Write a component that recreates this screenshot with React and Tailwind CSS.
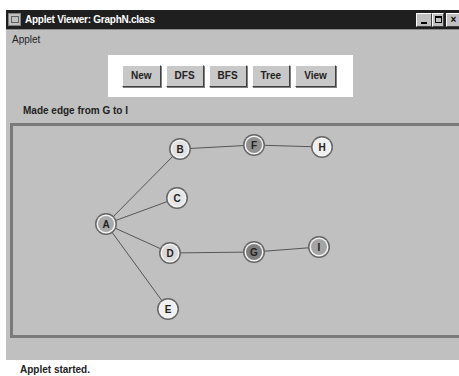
const nodes = [
  { id: "A", x: 106, y: 224, fill: "#a9a9a9" },
  { id: "B", x: 180, y: 149, fill: "#e2e2e2" },
  { id: "C", x: 177, y: 198, fill: "#e6e6e6" },
  { id: "D", x: 170, y: 253, fill: "#d9d9d9" },
  { id: "E", x: 168, y: 309, fill: "#f0f0f0" },
  { id: "F", x: 254, y: 145, fill: "#919191" },
  { id: "G", x: 254, y: 252, fill: "#7f7f7f" },
  { id: "H", x: 322, y: 147, fill: "#efefef" },
  { id: "I", x: 319, y: 247, fill: "#a4a4a4" },
];

const edges = [
  ["A", "B"],
  ["A", "C"],
  ["A", "D"],
  ["A", "E"],
  ["B", "F"],
  ["F", "H"],
  ["D", "G"],
  ["G", "I"],
];

// canvas inner origin on the page (after 3px border)
const OX = 13;
const OY = 126;

function Graph() {
  const byId = Object.fromEntries(nodes.map((n) => [n.id, n]));
  return (
    <svg width="460" height="215" className="absolute left-0 top-0">
      {edges.map(([a, b]) => (
        <line
          key={a + b}
          x1={byId[a].x - OX}
          y1={byId[a].y - OY}
          x2={byId[b].x - OX}
          y2={byId[b].y - OY}
          stroke="#555"
          strokeWidth="1"
        />
      ))}
      {nodes.map((n) => (
        <g key={n.id}>
          <circle cx={n.x - OX} cy={n.y - OY} r="11" fill="#666" />
          <circle cx={n.x - OX} cy={n.y - OY} r="9.5" fill="#f4f4f4" />
          <circle cx={n.x - OX} cy={n.y - OY} r="8" fill={n.fill} />
          <text
            x={n.x - OX}
            y={n.y - OY + 3.5}
            textAnchor="middle"
            fontFamily="Liberation Sans, Arial, sans-serif"
            fontWeight="bold"
            fontSize="10"
            fill="#222"
          >
            {n.id}
          </text>
        </g>
      ))}
    </svg>
  );
}

function Btn({ label }) {
  return (
    <button className="h-[22px] px-2 bg-[#c8c8c8] border border-t-white border-l-white border-r-[#404040] border-b-[#404040] shadow-[1px_1px_0_#808080] text-[10px] font-bold text-[#222] leading-none">
      {label}
    </button>
  );
}

export default function App() {
  return (
    <div
      className="w-[459px] h-[376px] bg-white overflow-hidden pt-[10px] pl-[6px]"
      style={{ fontFamily: '"Liberation Sans", Arial, sans-serif' }}
    >
      <div className="w-[470px] flex flex-col">
        <div className="h-[20px] bg-[#1f1f1f] flex items-center pl-[2px] border-b border-[#8a8a8a]">
          <div className="w-[13px] h-[13px] bg-[#c0c0c0] border border-[#808080] flex items-center justify-center">
            <div className="w-[8px] h-[7px] border border-[#606060]" />
          </div>
          <span className="ml-[4px] text-white text-[10px] font-bold tracking-tight">
            Applet Viewer: GraphN.class
          </span>
          <div className="ml-auto mr-[15px] flex items-center">
            <div className="w-[16px] h-[14px] bg-[#c0c0c0] border border-t-white border-l-white border-r-[#404040] border-b-[#404040] flex items-end justify-center pb-[2px]">
              <div className="w-[6px] h-[2px] bg-black" />
            </div>
            <div className="w-[12px] h-[14px] bg-[#c0c0c0] border border-t-white border-l-white border-r-[#404040] border-b-[#404040] flex items-center justify-center">
              <div className="w-[7px] h-[7px] border border-black border-t-2" />
            </div>
            <div className="ml-[2px] w-[15px] h-[14px] bg-[#c0c0c0] border border-t-white border-l-white border-r-[#404040] border-b-[#404040] flex items-center justify-center text-[10px] font-bold leading-none text-black">
              ×
            </div>
          </div>
        </div>

        <div className="bg-[#c0c0c0] flex flex-col h-[330px]">
          <div className="h-[18px] pl-[6px] flex items-center text-[10px] text-[#222]">
            Applet
          </div>
          <div className="ml-[102px] mt-[7px] w-[245px] h-[42px] bg-white flex items-center gap-[5px] pl-[14px]">
            <Btn label="New" />
            <Btn label="DFS" />
            <Btn label="BFS" />
            <Btn label="Tree" />
            <Btn label="View" />
          </div>
          <div className="h-[26px] pl-[17px] flex items-center text-[10px] font-bold text-[#222]">
            Made edge from G to I
          </div>
          <div className="relative ml-[4px] h-[215px] border-[3px] border-[#7a7a7a]">
            <Graph />
          </div>
          <div className="flex-1" />
        </div>
        <div className="h-[20px] bg-white pl-[14px] pt-[2px] text-[10px] font-bold text-[#222]">
          Applet started.
        </div>
      </div>
    </div>
  );
}
